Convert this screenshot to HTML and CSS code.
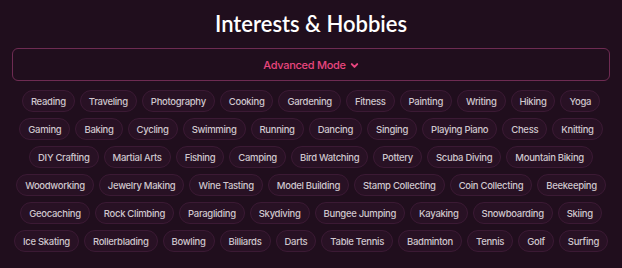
FILE: index.html
```html
<!DOCTYPE html>
<html lang="en">
<head>
    <meta charset="UTF-8">
    <meta name="viewport" content="width=device-width, initial-scale=1.0">
    <title>Interests & Hobbies</title>
    <link rel="stylesheet" href="styles.css">
</head>
<body>
    <div class="container">
        <h1 class="title">Interests &amp; Hobbies</h1>

        <!-- Advanced toggle -->
        <button class="advanced-btn">
            Advanced Mode
            <svg class="chevron" width="9" height="9" viewBox="0 0 10 10">
                <path d="M2 3.5 L5 6.5 L8 3.5" fill="none" stroke="currentColor" stroke-width="2.2" stroke-linecap="round" stroke-linejoin="round"/>
            </svg>
        </button>

        <!-- Tag cloud -->
        <div class="tag-list">
            <span class="tag">Reading</span>
            <span class="tag">Traveling</span>
            <span class="tag">Photography</span>
            <span class="tag">Cooking</span>
            <span class="tag">Gardening</span>
            <span class="tag">Fitness</span>
            <span class="tag">Painting</span>
            <span class="tag">Writing</span>
            <span class="tag">Hiking</span>
            <span class="tag">Yoga</span>
            <span class="tag">Gaming</span>
            <span class="tag">Baking</span>
            <span class="tag">Cycling</span>
            <span class="tag">Swimming</span>
            <span class="tag">Running</span>
            <span class="tag">Dancing</span>
            <span class="tag">Singing</span>
            <span class="tag">Playing Piano</span>
            <span class="tag">Chess</span>
            <span class="tag">Knitting</span>
            <span class="tag">DIY Crafting</span>
            <span class="tag">Martial Arts</span>
            <span class="tag">Fishing</span>
            <span class="tag">Camping</span>
            <span class="tag">Bird Watching</span>
            <span class="tag">Pottery</span>
            <span class="tag">Scuba Diving</span>
            <span class="tag">Mountain Biking</span>
            <span class="tag">Woodworking</span>
            <span class="tag">Jewelry Making</span>
            <span class="tag">Wine Tasting</span>
            <span class="tag">Model Building</span>
            <span class="tag">Stamp Collecting</span>
            <span class="tag">Coin Collecting</span>
            <span class="tag">Beekeeping</span>
            <span class="tag">Geocaching</span>
            <span class="tag">Rock Climbing</span>
            <span class="tag">Paragliding</span>
            <span class="tag">Skydiving</span>
            <span class="tag">Bungee Jumping</span>
            <span class="tag">Kayaking</span>
            <span class="tag">Snowboarding</span>
            <span class="tag">Skiing</span>
            <span class="tag">Ice Skating</span>
            <span class="tag">Rollerblading</span>
            <span class="tag">Bowling</span>
            <span class="tag">Billiards</span>
            <span class="tag">Darts</span>
            <span class="tag">Table Tennis</span>
            <span class="tag">Badminton</span>
            <span class="tag">Tennis</span>
            <span class="tag">Golf</span>
            <span class="tag">Surfing</span>
        </div>
    </div>
</body>
</html>
```

FILE: styles.css
```css
* {
    margin: 0;
    padding: 0;
    box-sizing: border-box;
}

body {
    font-family: 'Inter', 'Noto Sans', sans-serif;
    background: #200e1d;
    min-height: 100vh;
}

.container {
    padding: 10px 12px 0;
    display: flex;
    flex-direction: column;
    align-items: center;
}

.title {
    color: #ffffff;
    font-family: 'Lato', sans-serif;
    font-size: 22px;
    font-weight: 600;
    line-height: 28px;
    margin-bottom: 10px;
}

.advanced-btn {
    width: 100%;
    height: 33px;
    background: transparent;
    border: 1px solid #6e2b52;
    border-radius: 6px;
    color: #e8467f;
    font-family: 'Inter', sans-serif;
    font-size: 11px;
    font-weight: 500;
    letter-spacing: -0.3px;
    display: flex;
    align-items: center;
    justify-content: center;
    gap: 4px;
    cursor: pointer;
}

.chevron {
    margin-top: 1px;
}

.tag-list {
    display: flex;
    flex-wrap: wrap;
    justify-content: center;
    gap: 6px 5px;
    margin-top: 9px;
    width: 100%;
}

.tag {
    height: 22px;
    padding: 0 8px;
    display: flex;
    align-items: center;
    border: 1px solid #3b1a34;
    border-radius: 11px;
    background: #281124;
    color: #cfc6cd;
    font-size: 9.5px;
    font-weight: 500;
    letter-spacing: -0.3px;
    white-space: nowrap;
}
```
